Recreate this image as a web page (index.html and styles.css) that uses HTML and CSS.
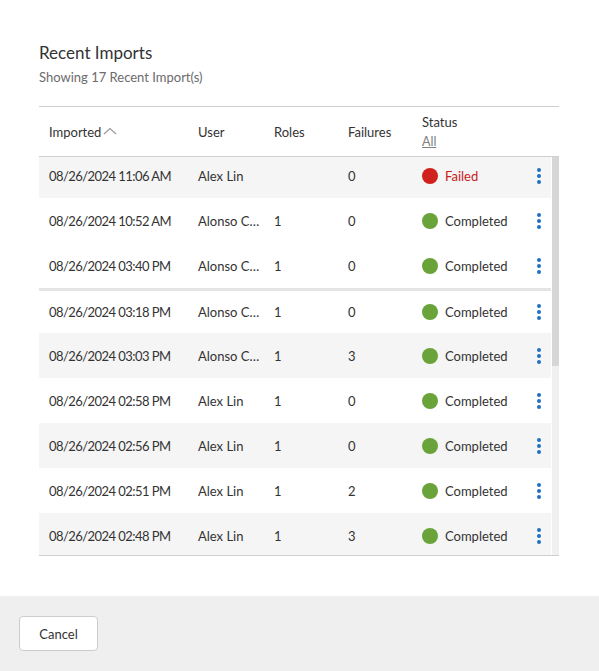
FILE: index.html
```html
<!DOCTYPE html>
<html lang="en">
<head>
    <meta charset="UTF-8">
    <meta name="viewport" content="width=device-width, initial-scale=1.0">
    <title>Recent Imports</title>
    <link rel="stylesheet" href="styles.css">
</head>
<body>
    <div class="modal">
        <div class="modal-body">
            <h2 class="title">Recent Imports</h2>
            <div class="subtitle">Showing 17 Recent Import(s)</div>

            <div class="table">
                <!-- header -->
                <div class="thead">
                    <div class="th">Imported<svg class="sort" width="14" height="8" viewBox="0 0 14 8"><path d="M1 7 L7 1.5 L13 7" fill="none" stroke="#9a9a9a" stroke-width="1.2"/></svg></div>
                    <div class="th">User</div>
                    <div class="th">Roles</div>
                    <div class="th">Failures</div>
                    <div class="th th-status">Status<a class="filter-link">All</a></div>
                    <div class="th"></div>
                </div>

                <!-- rows + scrollbar -->
                <div class="tbody">
                    <div class="rows">
                        <div class="rows-inner">
                            <div class="row alt">
                                <div class="td date">08/26/2024 11:06 AM</div>
                                <div class="td user">Alex Lin</div>
                                <div class="td"></div>
                                <div class="td">0</div>
                                <div class="td"><span class="dot dot-failed"></span><span class="failed">Failed</span></div>
                                <div class="td kebab"><span></span><span></span><span></span></div>
                            </div>
                            <div class="row">
                                <div class="td date">08/26/2024 10:52 AM</div>
                                <div class="td user">Alonso C…</div>
                                <div class="td">1</div>
                                <div class="td">0</div>
                                <div class="td"><span class="dot dot-ok"></span>Completed</div>
                                <div class="td kebab"><span></span><span></span><span></span></div>
                            </div>
                            <div class="row">
                                <div class="td date">08/26/2024 03:40 PM</div>
                                <div class="td user">Alonso C…</div>
                                <div class="td">1</div>
                                <div class="td">0</div>
                                <div class="td"><span class="dot dot-ok"></span>Completed</div>
                                <div class="td kebab"><span></span><span></span><span></span></div>
                            </div>
                            <div class="row divider">
                                <div class="td date">08/26/2024 03:18 PM</div>
                                <div class="td user">Alonso C…</div>
                                <div class="td">1</div>
                                <div class="td">0</div>
                                <div class="td"><span class="dot dot-ok"></span>Completed</div>
                                <div class="td kebab"><span></span><span></span><span></span></div>
                            </div>
                            <div class="row alt">
                                <div class="td date">08/26/2024 03:03 PM</div>
                                <div class="td user">Alonso C…</div>
                                <div class="td">1</div>
                                <div class="td">3</div>
                                <div class="td"><span class="dot dot-ok"></span>Completed</div>
                                <div class="td kebab"><span></span><span></span><span></span></div>
                            </div>
                            <div class="row">
                                <div class="td date">08/26/2024 02:58 PM</div>
                                <div class="td user">Alex Lin</div>
                                <div class="td">1</div>
                                <div class="td">0</div>
                                <div class="td"><span class="dot dot-ok"></span>Completed</div>
                                <div class="td kebab"><span></span><span></span><span></span></div>
                            </div>
                            <div class="row alt">
                                <div class="td date">08/26/2024 02:56 PM</div>
                                <div class="td user">Alex Lin</div>
                                <div class="td">1</div>
                                <div class="td">0</div>
                                <div class="td"><span class="dot dot-ok"></span>Completed</div>
                                <div class="td kebab"><span></span><span></span><span></span></div>
                            </div>
                            <div class="row">
                                <div class="td date">08/26/2024 02:51 PM</div>
                                <div class="td user">Alex Lin</div>
                                <div class="td">1</div>
                                <div class="td">2</div>
                                <div class="td"><span class="dot dot-ok"></span>Completed</div>
                                <div class="td kebab"><span></span><span></span><span></span></div>
                            </div>
                            <div class="row alt">
                                <div class="td date">08/26/2024 02:48 PM</div>
                                <div class="td user">Alex Lin</div>
                                <div class="td">1</div>
                                <div class="td">3</div>
                                <div class="td"><span class="dot dot-ok"></span>Completed</div>
                                <div class="td kebab"><span></span><span></span><span></span></div>
                            </div>
                        </div>
                    </div>
                    <div class="scrollbar"><div class="thumb"></div></div>
                </div>
            </div>
        </div>

        <div class="modal-footer">
            <button class="btn">Cancel</button>
        </div>
    </div>
</body>
</html>
```

FILE: styles.css
```css
html, body {
    margin: 0;
    padding: 0;
    height: 100%;
}
body {
    font-family: Lato, "Liberation Sans", Arial, sans-serif;
    font-size: 13px;
    color: #333;
    background: #fff;
}
.modal {
    display: flex;
    flex-direction: column;
    height: 100vh;
}
.modal-body {
    flex: 1;
    padding: 41px 40px 0 39px;
}
.title {
    margin: 0;
    font-size: 17px;
    font-weight: 400;
    line-height: 24px;
    color: #333;
}
.subtitle {
    margin-top: 3px;
    font-size: 13px;
    line-height: 18px;
    color: #6b6b6b;
}
.table {
    margin-top: 20px;
    border-top: 1px solid #cfcfcf;
    border-bottom: 1px solid #cfcfcf;
}
.thead {
    display: grid;
    grid-template-columns: 149px 76px 74px 74px 115px 24px;
    height: 49px;
    padding-right: 8px;
    border-bottom: 1px solid #cfcfcf;
}
.th {
    display: flex;
    align-items: center;
    padding-left: 10px;
    color: #333;
}
.sort {
    margin-left: 2px;
    margin-top: -2px;
}
.th-status {
    flex-direction: column;
    align-items: flex-start;
    justify-content: center;
}
.filter-link {
    margin-top: 4px;
    color: #808080;
    text-decoration: underline;
    font-size: 12.5px;
}
.tbody {
    display: flex;
    height: 398px;
}
.rows {
    flex: 1;
    overflow: hidden;
}
.rows-inner {
    margin-top: -4px;
}
.scrollbar {
    width: 7px;
    margin-left: 1px;
    background: #f0f0f0;
}
.thumb {
    height: 209px;
    background: #d6d6d6;
}
.row {
    display: grid;
    grid-template-columns: 149px 76px 74px 74px 115px 24px;
    height: 45px;
    box-sizing: border-box;
    background: #fff;
}
.row.alt {
    background: #f5f5f5;
}
.row.divider {
    border-top: 3px solid #e4e4e4;
}
.td {
    display: flex;
    align-items: center;
    padding-left: 10px;
    white-space: nowrap;
}
.td.date {
    letter-spacing: -0.55px;
}
.dot {
    display: inline-block;
    width: 16px;
    height: 16px;
    border-radius: 50%;
    margin-right: 7px;
    flex-shrink: 0;
}
.dot-ok {
    background: #6aa33a;
}
.dot-failed {
    background: #d0211c;
}
.failed {
    color: #c8201b;
}
.kebab {
    flex-direction: column;
    justify-content: center;
    align-items: center;
    gap: 2px;
    padding-left: 0;
}
.kebab span {
    width: 4px;
    height: 4px;
    border-radius: 50%;
    background: #1f6fc5;
}
.modal-footer {
    height: 75px;
    box-sizing: border-box;
    padding: 20px 19px;
    background: #efefef;
}
.btn {
    width: 79px;
    height: 35px;
    background: #fff;
    border: 1px solid #cccccc;
    border-radius: 4px;
    font-family: inherit;
    font-size: 13px;
    color: #333;
    cursor: pointer;
}
```
